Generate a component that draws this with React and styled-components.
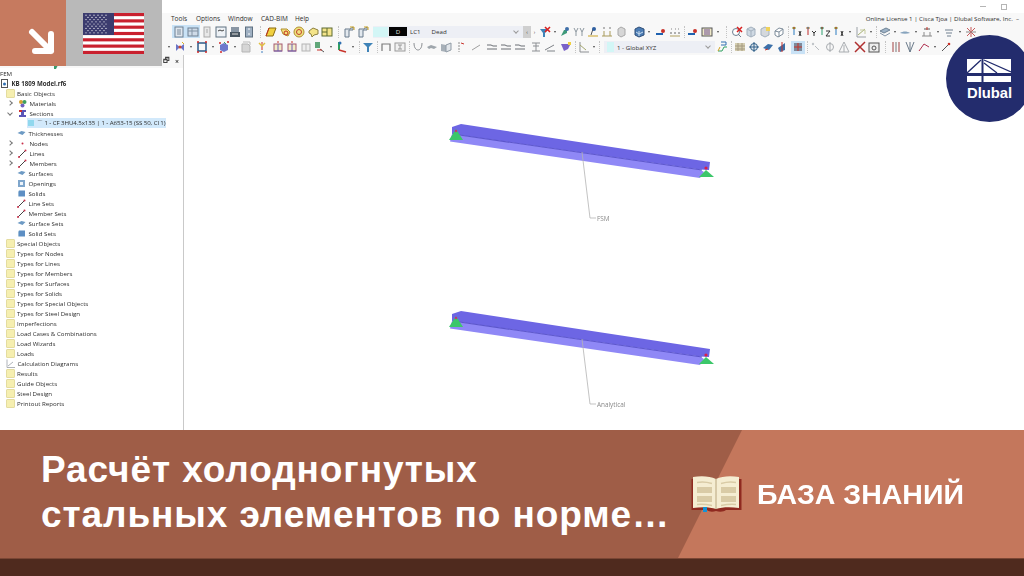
import React from 'react';
import styled, { createGlobalStyle } from 'styled-components';

const GlobalStyle = createGlobalStyle`
  html, body {
    margin: 0;
    padding: 0;
    background: #fff;
  }
`;

const Page = styled.div`
  position: relative;
  width: 1024px;
  height: 576px;
  overflow: hidden;
  display: flex;
  flex-direction: column;
  font-family: "Open Sans", "Liberation Sans", sans-serif;
`;

const Screen = styled.div`
  height: 430px;
  display: flex;
  flex-direction: column;
  filter: blur(0.45px);
  color: #2e2e2e;
  font-size: 6.15px;
`;

const TitleBar = styled.div`
  height: 13px;
  display: flex;
  justify-content: flex-end;
  align-items: center;
  gap: 15px;
  padding-right: 17px;
  box-sizing: border-box;
`;

const WinDash = styled.div`
  width: 6px;
  height: 1px;
  background: #b5b5b5;
`;

const WinRestore = styled.div`
  width: 4px;
  height: 4px;
  border: 1px solid #b5b5b5;
`;

const MenuBar = styled.div`
  height: 11px;
  display: flex;
  align-items: center;
  padding-left: 171px;
  background: #f8f8f8;
  font-size: 6.5px;
`;

const MenuItem = styled.span`
  width: ${(p) => p.$w}px;
  font-weight: 500;
`;

const License = styled.span`
  margin-left: auto;
  padding-right: 5px;
  white-space: nowrap;
  font-size: 6.15px;
`;

const ToolRow = styled.div`
  height: ${(p) => p.$h}px;
  display: flex;
  align-items: center;
  padding-left: ${(p) => p.$left}px;
  background: #f8f8f8;
  white-space: nowrap;
`;

const Slot = styled.div`
  flex: none;
  width: 14px;
  height: 13px;
  display: flex;
  align-items: center;
  justify-content: center;
  background: ${(p) => (p.$on ? '#c9e2f6' : 'transparent')};
`;

const Caret = styled.div`
  flex: none;
  width: ${(p) => p.$w || 8}px;
  display: flex;
  justify-content: center;
  &::after {
    content: '';
    border-left: 1.5px solid transparent;
    border-right: 1.5px solid transparent;
    border-top: 2px solid #444;
  }
`;

const Sep = styled.div`
  flex: none;
  width: ${(p) => p.$w}px;
  height: 12px;
  display: flex;
  justify-content: center;
  &::after {
    content: '';
    border-left: 1px dotted #c4c4c4;
  }
`;

const Gap = styled.div`
  flex: none;
  width: 2px;
`;

const LoadCombo = styled.div`
  flex: none;
  width: 150px;
  height: 12px;
  margin-left: 3px;
  display: flex;
  align-items: center;
  background: #edeff5;
`;

const Swatch = styled.div`
  flex: none;
  width: ${(p) => p.$w}px;
  height: 10px;
  margin-left: ${(p) => p.$m || 0}px;
  background: #d3f6f6;
`;

const DeadBadge = styled.div`
  flex: none;
  width: 18px;
  height: 9px;
  margin-left: 1px;
  background: #050505;
  color: #ddd;
  line-height: 9px;
  text-align: center;
`;

const ComboText = styled.span`
  margin-left: ${(p) => p.$m}px;
`;

const Chevron = styled.span`
  margin-left: auto;
  margin-right: 5px;
  width: 3px;
  height: 3px;
  margin-top: -2px;
  border-right: 1px solid #9a9a9a;
  border-bottom: 1px solid #9a9a9a;
  transform: rotate(45deg);
`;

const NavStep = styled.div`
  flex: none;
  width: ${(p) => p.$w}px;
  height: 12px;
  background: ${(p) => (p.$gray ? '#cfcfcf' : 'transparent')};
  color: #333;
  font-size: 5px;
  line-height: 12px;
  text-align: center;
`;

const CoordCombo = styled(LoadCombo)`
  width: 111px;
  margin-left: 1px;
`;

const Workspace = styled.div`
  flex: 1;
  min-height: 0;
  display: flex;
`;

const Sidebar = styled.aside`
  flex: none;
  width: 184px;
  box-sizing: border-box;
  border-right: 1px solid #c9c9c9;
  display: flex;
  flex-direction: column;
`;

const PanelHead = styled.div`
  height: 13px;
  flex: none;
  display: flex;
  align-items: center;
  justify-content: flex-end;
  gap: 5px;
  padding-right: 4px;
  background: #f8f8f8;
  color: #444;
  font-size: 7px;
  font-weight: 700;
`;

const GreenBit = styled.svg`
  margin: 8px auto 0 51px;
  width: 8px;
  height: 7px;
`;

const Row = styled.div`
  height: 10px;
  display: flex;
  align-items: center;
  white-space: nowrap;
  font-weight: ${(p) => (p.$bold ? 700 : 400)};
  padding-left: ${(p) => p.$pad}px;
`;

const Twist = styled.span`
  flex: none;
  width: 3px;
  height: 3px;
  margin: 0 ${(p) => p.$right}px 0 0;
  border-right: 1px solid #777;
  border-bottom: 1px solid #777;
  transform: rotate(${(p) => (p.$open ? '45deg' : '-45deg')});
`;

const Folder = styled.span`
  flex: none;
  width: 7px;
  height: 7px;
  margin-right: 2px;
  background: #f6efb0;
  border: 1px solid #e4dc9f;
  border-radius: 1px;
`;

const TreeIcon = styled.svg`
  flex: none;
  width: 9px;
  height: 9px;
  margin-right: 2.5px;
`;

const Selected = styled.div`
  flex: none;
  width: 139px;
  height: 10px;
  display: flex;
  align-items: center;
  background: #d2e9fb;
  letter-spacing: -0.09px;
`;

const SelSwatch = styled.span`
  flex: none;
  width: 6px;
  height: 6px;
  margin: 0 3px 0 1px;
  background: #91d8ee;
`;

const Viewport = styled.main`
  flex: 1;
  min-width: 0;
  background: #fff;
`;

const ModelSvg = styled.svg`
  display: block;
  width: 100%;
  height: 100%;
`;

const Banner = styled.section`
  height: 128px;
  flex: none;
  display: flex;
  background: #9f5d47;
`;

const TitleWrap = styled.div`
  flex: none;
  width: 678px;
  box-sizing: border-box;
  padding: 17px 0 0 41px;
`;

const Title = styled.h1`
  margin: 0;
  color: #fff;
  font-family: "Liberation Sans", Arial, sans-serif;
  font-size: 37px;
  font-weight: 700;
  line-height: 45px;
  letter-spacing: 0.9px;
  white-space: nowrap;
`;

const Category = styled.div`
  position: relative;
  flex: 1;
  display: flex;
  align-items: center;
  padding-left: 13px;
  &::before {
    content: '';
    position: absolute;
    inset: 0;
    background: #c4775c;
    clip-path: polygon(64px 0, 100% 0, 100% 100%, 0 100%);
  }
`;

const CategoryLabel = styled.span`
  position: relative;
  margin-left: 15px;
  color: #fff;
  font-family: "Liberation Sans", Arial, sans-serif;
  font-size: 28.5px;
  font-weight: 700;
  white-space: nowrap;
`;

const BookSvg = styled.svg`
  position: relative;
  flex: none;
  width: 51px;
  height: 36px;
`;

const Footer = styled.div`
  flex: 1;
  background: #4f2a1e;
  border-top: 1px solid #7a4634;
`;

const Corner = styled.div`
  position: absolute;
  left: 0;
  top: 0;
  display: flex;
  height: 66px;
`;

const ArrowBox = styled.div`
  width: 66px;
  background: #c67a5f;
`;

const FlagBox = styled.div`
  width: 96px;
  background: #b9b9b9;
  display: flex;
  align-items: center;
  padding-left: 17px;
  box-sizing: border-box;
`;

const Logo = styled.div`
  position: absolute;
  left: 946px;
  top: 35px;
  width: 87px;
  height: 87px;
  border-radius: 50%;
  background: #232c6d;
  box-sizing: border-box;
  padding: 24px 0 0 21px;
  color: #fff;
  font-family: "Liberation Sans", Arial, sans-serif;
  font-size: 14.8px;
  font-weight: 700;
  line-height: 16px;
`;

const LogoMark = styled.svg`
  display: block;
  width: 44px;
  height: 23px;
  margin-bottom: 3px;
`;

// toolbar pictures, 12x12
const glyphs = {
  win: <><rect x="2" y="1" width="8" height="10" fill="#dfe6ee" stroke="#6d7f91" /><path d="M4 4h4M4 6h4M4 8h4" stroke="#7b8a99" /></>,
  wide: <><rect x="1" y="2" width="10" height="8" fill="#cfdbe8" stroke="#6d7f91" /><path d="M1 5h10M5 2v8" stroke="#8394a5" /></>,
  page: <><rect x="3" y="1" width="6" height="10" fill="#e8e8e8" stroke="#a9a9a9" /><path d="M5 4h2M5 6h2" stroke="#aaa" /></>,
  shot: <><rect x="1" y="1" width="10" height="10" fill="#eef2f6" stroke="#5f7080" /><path d="M3 5l2-1 2 1 2-1" stroke="#444" fill="none" /></>,
  disk: <><rect x="2" y="1" width="8" height="5" fill="#8a97a5" /><rect x="1" y="6" width="10" height="5" fill="#4a5661" /><path d="M3 8h6" stroke="#ddd" /></>,
  tall: <><rect x="2.5" y="1" width="7" height="10" fill="#9fb0c2" stroke="#5f7080" /><path d="M5 3h2M5 8h2" stroke="#fff" /></>,
  para: <><path d="M4 2h7l-3 8H1z" fill="#f0d040" stroke="#8a6a10" /><path d="M4 2L1 10" stroke="#c03020" /></>,
  tag: <><path d="M2 3h6l3 3-2 4-5-2z" fill="#f4e07a" stroke="#b09030" /><circle cx="7" cy="7" r="2" fill="none" stroke="#c03020" /></>,
  target: <><circle cx="6" cy="6" r="5" fill="#efe27e" stroke="#b09030" /><circle cx="6" cy="6" r="2.5" fill="none" stroke="#c04030" /></>,
  cloud: <><path d="M2 5l4-3 5 2v4l-4 1-2 2-1-3-2-1z" fill="#f4e48a" stroke="#8c8040" /></>,
  note: <><rect x="1" y="2" width="10" height="8" fill="#f4e48a" stroke="#5c6a30" /><path d="M6 2v8M1 6h5" stroke="#5c6a30" /></>,
  ell: <><path d="M2 11V3h5l3-2v3H6v7z" fill="#e2e8ee" stroke="#687a8c" /><path d="M7 1h4v3" stroke="#c9a226" fill="none" /></>,
  funnel: <><path d="M1 2h10L7 6v5H5V6z" fill="#3f83b8" /></>,
  funnelX: <><path d="M1 3h8L6 7v4H4V7z" fill="#3f83b8" /><path d="M6 1l5 5M11 1L6 6" stroke="#d82020" strokeWidth="1.6" /></>,
  plug: <><path d="M2 10l3-6h3v3z" fill="#3e9a7a" /><circle cx="8" cy="3" r="2" fill="#3f6fa8" /></>,
  forks: <><path d="M3 10V6M9 10V6M1 2l2 4 2-4M7 2l2 4 2-4" stroke="#8c979f" fill="none" /></>,
  pinBase: <><path d="M1 10h10" stroke="#c9a226" /><path d="M4 9l2-6" stroke="#555" /><circle cx="7" cy="3" r="2" fill="#2f5fa0" /></>,
  posts: <><path d="M1 10h10M3 10V5M9 10V5" stroke="#a89a5a" /><path d="M2 2h2M8 2h2" stroke="#777" /></>,
  ghost: <><path d="M3 3l3-2 4 2v6l-4 2-3-2z" fill="#d6d6d6" stroke="#a8a8a8" /></>,
  stack: <><path d="M2 3l4-2 5 2v6l-5 2-4-2z" fill="#4b7cb4" stroke="#2f4f78" /><path d="M6 5v5M3 6l3 2 4-2" stroke="#c9dcee" /></>,
  dumb: <><path d="M1 8h7" stroke="#1f62b0" strokeWidth="2" /><circle cx="8" cy="5" r="2" fill="#c8322a" /></>,
  dashes: <><path d="M1 7h2M5 7h2M9 7h2" stroke="#666" /><path d="M2 3h1M6 3h1M9 3h1" stroke="#888" /><path d="M1 10h10" stroke="#b0a060" /></>,
  ruler: <><rect x="1" y="2" width="10" height="8" fill="#efe9c9" stroke="#555" /><path d="M3 4h6M3 6h6M3 8h6" stroke="#6a4a90" /></>,
  magX: <><circle cx="5" cy="6" r="3.5" fill="#fff" stroke="#6d7f91" /><path d="M7 8l3 3" stroke="#6d7f91" /><path d="M6 1l5 5M11 1L6 6" stroke="#d82020" strokeWidth="1.5" /></>,
  cube: <><path d="M2 3l4-2 4 2v6l-4 2-4-2z" fill="#cfd9e3" stroke="#a3b0bd" /><path d="M6 5v6M2 3l4 2 4-2" stroke="#a3b0bd" fill="none" /></>,
  cubeY: <><path d="M2 3l4-2 4 2v6l-4 2-4-2z" fill="#d4d8dc" stroke="#a3b0bd" /><path d="M7 1h4v4H7z" fill="#efd25a" /></>,
  cubeLine: <><path d="M2 5l4-3 4 1v5l-5 3-3-2z" fill="#fff" stroke="#7e8d9b" /><path d="M6 6v5M2 5l4 1 4-3" stroke="#7e8d9b" fill="none" /></>,
  axisX: <><path d="M3 3v6" stroke="#2d7dc0" /><circle cx="3" cy="2" r="1.2" fill="#d02a2a" /><path d="M1 2h4" stroke="#7ab040" /><path d="M8 5l2 5M10 5l-2 5" stroke="#333" /></>,
  axisY: <><path d="M3 3v6" stroke="#c02a2a" /><circle cx="3" cy="2" r="1.2" fill="#2f7fc0" /><path d="M1 2h4" stroke="#d07a30" /><path d="M7 5l2 2 2-2M9 7v3" stroke="#333" fill="none" /></>,
  axisZ: <><path d="M3 3v6" stroke="#2fa070" /><circle cx="3" cy="2" r="1.2" fill="#d02a2a" /><path d="M1 2h4" stroke="#2fa070" /><path d="M7 5h4l-4 5h4" stroke="#333" fill="none" /></>,
  chart: <><path d="M2 1v10h9" stroke="#9aa0a6" fill="none" /><path d="M3 9l7-6" stroke="#a5b070" /><path d="M5 4h5v4" stroke="#c4c9a0" fill="none" /></>,
  plate: <><path d="M1 5l6-3 4 2-6 3z" fill="#9fb4c8" stroke="#6f8396" /><path d="M1 7l5 3 5-3" stroke="#8294a6" fill="none" /></>,
  fin: <><path d="M1 7c3-2 7-2 10 0-3 1-7 1-10 0z" fill="#86a3bd" /></>,
  pier: <><path d="M1 10h10M3 10V6M9 10V6" stroke="#8a8a8a" /><path d="M3 3h6" stroke="#555" /><path d="M6 1v3" stroke="#c8322a" /></>,
  shelf: <><path d="M2 3h8v2H2zM3 6h6v2H3zM4 9h4v2H4z" fill="#b4bcc4" /></>,
  spark: <><path d="M2 2l8 8M2 10l8-8M6 1v10" stroke="#c85a5a" /><path d="M1 6h10" stroke="#8a8a8a" /></>,
  block: <><rect x="1" y="3" width="9" height="7" fill="#5c8bb8" /><path d="M3 1l3 3" stroke="#c8322a" /></>,
  fan: <><path d="M2 3l4 3-4 4zM10 3L6 6l4 4z" fill="#6a74c8" /><circle cx="6" cy="6" r="1.5" fill="#d04a2a" /><path d="M8 1l2 2" stroke="#e0b020" /></>,
  frame: <><rect x="2" y="2" width="8" height="8" fill="none" stroke="#2d5a88" strokeWidth="1.5" /><path d="M1 1h2M9 11h2M1 11h2M9 1h2" stroke="#d02a2a" strokeWidth="1.5" /></>,
  cubes: <><path d="M2 4l4-2 4 2v5l-4 2-4-2z" fill="#6f78cc" /><path d="M1 2h2M9 1h2M2 11h2" stroke="#d02a2a" strokeWidth="1.5" /><path d="M6 1l2 2" stroke="#40a070" /></>,
  sheetG: <><path d="M2 3h6l2 2v6H2z" fill="#d6d6d6" stroke="#b5b5b5" /><path d="M3 1h7v3" stroke="#bbb" fill="none" /></>,
  bolt: <><path d="M6 1v8" stroke="#c8322a" /><path d="M3 2l3 3 3-3" stroke="#e0c040" fill="none" strokeWidth="1.5" /><path d="M5 11h2" stroke="#3f7fc0" /></>,
  gate: <><rect x="2" y="3" width="8" height="7" fill="#f1ecc8" stroke="#a45a70" /><path d="M2 10h8M6 3v7" stroke="#6f5fb0" /><path d="M5 1h2" stroke="#c8322a" /></>,
  gateG: <><rect x="2" y="3" width="8" height="7" fill="#eee" stroke="#b4b4b4" /><path d="M6 3v7" stroke="#bbb" /></>,
  axes: <><rect x="1" y="1" width="5" height="6" fill="#62a77a" /><path d="M6 8l4 3" stroke="#555" /><path d="M3 9h5" stroke="#c8322a" /></>,
  axes2: <><path d="M3 1v8" stroke="#2fa060" strokeWidth="2" /><path d="M3 9l7 2" stroke="#c8322a" strokeWidth="1.5" /><circle cx="4" cy="2" r="1.5" fill="#2f6fb0" /></>,
  arch: <><path d="M2 10V3h8v7" fill="none" stroke="#7a7a7a" strokeWidth="1.2" /></>,
  boxI: <><rect x="1" y="2" width="10" height="8" fill="#f1f1f1" stroke="#9a9a9a" /><path d="M4 4h4M4 8h4M6 4v4" stroke="#9a9a9a" /></>,
  vee: <><path d="M2 2c0 6 3 7 4 7s4-1 4-7" fill="none" stroke="#8c8f93" /></>,
  shoe: <><path d="M1 6l4-2 6 2-3 2-3-1-2 1z" fill="#9fa6ac" /></>,
  fold: <><path d="M1 3l5 1v7l-5-1z" fill="#a7b0b8" /><path d="M6 4l5-2v7l-5 2z" fill="#e2e6ea" stroke="#8f9aa5" /></>,
  tick: <><path d="M5 1v10" stroke="#909090" strokeDasharray="2 1" /><path d="M7 2l3 1" stroke="#c8322a" /></>,
  slash: <><path d="M2 9l8-5" stroke="#a0a0a0" /></>,
  eq: <><path d="M1 4h4c1 0 1 1 2 1h4M1 8h10" stroke="#6a6f75" fill="none" /></>,
  hbox: <><path d="M2 2h8M2 10h8M6 2v8M3 5h6" stroke="#8c8f93" fill="none" /></>,
  wedge: <><path d="M1 9l9-5M3 10h8" stroke="#7f8388" /></>,
  star: <><path d="M1 3h7l3-1-3 6-4 2z" fill="#7a62c8" /><path d="M8 1h3v3H8z" fill="#f0d040" /></>,
  graph: <><path d="M2 1v10h9" stroke="#8c8f93" fill="none" /><path d="M2 4l6 5" stroke="#a5a870" /></>,
  tree: <><path d="M2 10h4l2-4h3" stroke="#2fa060" fill="none" /><path d="M5 1h5v3H5" stroke="#2f6fb0" fill="none" /><path d="M2 10l2-4" stroke="#d0a020" /></>,
  mesh: <><rect x="1" y="2" width="10" height="8" fill="#d4cdb0" /><path d="M1 5h10M1 8h10M4 2v8M8 2v8" stroke="#a59a80" /></>,
  hit: <><circle cx="6" cy="6" r="3.5" fill="#e4e9ee" stroke="#2f5f88" /><path d="M6 1v10M1 6h10" stroke="#2f5f88" /></>,
  wing: <><path d="M1 7l5-4 5 1-4 5z" fill="#3b6fa8" /><path d="M3 9l3-1" stroke="#c8322a" /></>,
  wing2: <><path d="M2 7l7-5v7l-5 2z" fill="#3b6fa8" /><path d="M6 1v10" stroke="#c8322a" /></>,
  box3: <><rect x="2" y="2" width="8" height="8" fill="#7d8a9a" /><path d="M2 6h8M6 2v8" stroke="#c8322a" /></>,
  dots: <><circle cx="3" cy="3" r="1.2" fill="#c0c4c8" /><path d="M5 5l4 4" stroke="#b8bcc0" /></>,
  phi: <><circle cx="6" cy="6" r="3.5" fill="none" stroke="#a8acb0" /><path d="M6 1v10" stroke="#a8acb0" /></>,
  tri: <><path d="M6 1l5 10H1z" fill="none" stroke="#a8acb0" /><path d="M6 4v7" stroke="#a8acb0" /></>,
  xRed: <><path d="M1 1l10 10M11 1L1 11" stroke="#b03030" strokeWidth="1.5" /></>,
  cam: <><rect x="1" y="2" width="10" height="9" fill="#eee" stroke="#555" /><circle cx="6" cy="7" r="2" fill="none" stroke="#555" /></>,
  bars: <><path d="M3 1v10M9 1v10" stroke="#a04040" /><path d="M6 1v10" stroke="#777" /></>,
  tines: <><path d="M2 1l4 10 4-10M6 1v10" stroke="#6a7a8a" fill="none" /></>,
  kink: <><path d="M1 10l5-7 5 3" stroke="#b03050" fill="none" /></>,
  rod: <><path d="M2 10l8-8" stroke="#555" /><circle cx="9" cy="3" r="1.3" fill="#c8322a" /></>,
};

const Tool = ({ name }) => {
  const on = name.endsWith('*');
  const key = on ? name.slice(0, -1) : name;
  return (
    <Slot $on={on}>
      <svg width="12" height="12" viewBox="0 0 12 12">
        <g fill="none" strokeWidth="1">{glyphs[key]}</g>
      </svg>
    </Slot>
  );
};

const Tools = ({ list }) =>
  list.split(' ').map((t, i) => {
    if (t === 'v') return <Caret key={i} />;
    if (t === 'u') return <Caret key={i} $w={6} />;
    if (t === '|') return <Sep key={i} $w={8} />;
    if (t === ':') return <Sep key={i} $w={4} />;
    if (t === '+') return <Gap key={i} />;
    return <Tool key={i} name={t} />;
  });

const menu = [
  ['Tools', 25],
  ['Options', 32],
  ['Window', 33],
  ['CAD-BIM', 34],
  ['Help', 30],
];

const tree = [
  { t: 'FEM', pad: 0, plain: true },
  { t: 'KB 1809 Model.rf6', pad: -5, bold: true, icon: 'file' },
  { t: 'Basic Objects', pad: 6, folder: true },
  { t: 'Materials', pad: 8, tw: 'closed', icon: 'mat' },
  { t: 'Sections', pad: 8, tw: 'open', icon: 'sec' },
  { t: '1 - CF 3HU4.5x135 | 1 - A653-15 (SS 50, Cl 1)', selected: true, pad: 27 },
  { t: 'Thicknesses', pad: 17, icon: 'plate' },
  { t: 'Nodes', pad: 8, tw: 'closed', icon: 'dot' },
  { t: 'Lines', pad: 8, tw: 'closed', icon: 'line' },
  { t: 'Members', pad: 8, tw: 'closed', icon: 'line' },
  { t: 'Surfaces', pad: 17, icon: 'plate' },
  { t: 'Openings', pad: 17, icon: 'open' },
  { t: 'Solids', pad: 17, icon: 'solid' },
  { t: 'Line Sets', pad: 17, icon: 'line' },
  { t: 'Member Sets', pad: 17, icon: 'line' },
  { t: 'Surface Sets', pad: 17, icon: 'plate' },
  { t: 'Solid Sets', pad: 17, icon: 'solid' },
  ...[
    'Special Objects',
    'Types for Nodes',
    'Types for Lines',
    'Types for Members',
    'Types for Surfaces',
    'Types for Solids',
    'Types for Special Objects',
    'Types for Steel Design',
    'Imperfections',
    'Load Cases & Combinations',
    'Load Wizards',
    'Loads',
  ].map((t) => ({ t, pad: 6, folder: true })),
  { t: 'Calculation Diagrams', pad: 6, icon: 'diagram' },
  ...['Results', 'Guide Objects', 'Steel Design', 'Printout Reports'].map((t) => ({ t, pad: 6, folder: true })),
];

const treeGlyphs = {
  file: <><rect x="1.5" y="0.5" width="6" height="8" fill="#fff" stroke="#555" /><circle cx="4.5" cy="5" r="1.5" fill="#2f6fb0" /></>,
  mat: <><circle cx="3" cy="3" r="2" fill="#d8a030" /><circle cx="6.5" cy="3" r="2" fill="#3f9f60" /><circle cx="4.5" cy="6.5" r="2" fill="#7060c0" /></>,
  sec: <><path d="M1 1h7v2H6v3h2v2H1V6h2V3H1z" fill="#5a55b8" /><path d="M1 1h3v2H1z" fill="#d03030" /></>,
  plate: <path d="M0.5 4l4-2 4 1-3 3z" fill="#6d9ac4" />,
  dot: <circle cx="4.5" cy="4.5" r="1" fill="#c8304a" />,
  line: <><path d="M1 8l6-6" stroke="#444" /><circle cx="7.5" cy="1.5" r="1" fill="#c8304a" /><circle cx="1" cy="8" r="1" fill="#c8304a" /></>,
  open: <><rect x="1" y="1" width="7" height="7" fill="#7fa6cc" /><rect x="3" y="3" width="3" height="3" fill="#eef4fa" /></>,
  solid: <><rect x="2" y="1.5" width="6" height="6" fill="#5d8fc4" /><path d="M2 1.500l-1 1v5l1 0z" fill="#9abbd8" /></>,
  diagram: <path d="M1 0.5v8h8M2 7l5-4" fill="none" stroke="#9aa0a6" strokeWidth="0.8" />,
};

const Beam = ({ dy, label, endX, endY }) => (
  <g transform={`translate(0 ${dy})`}>
    <polygon points="452,127 461,124 710,162 709,170 700,169.500 452,134" fill="#6d66e4" />
    <polygon points="452,134 700,169.500 704,172 700,178 450,141.500" fill="#8f88f6" />
    <path d="M456,134.500 L702,170" stroke="#5c56cc" strokeWidth="1.2" />
    <polygon points="456,129 463,140 449,140" fill="#3cc76a" />
    <polygon points="706,170 714,177 699,177" fill="#3cc76a" />
    <circle cx="456" cy="131" r="1.2" fill="#c43a6a" />
    <circle cx="706" cy="168" r="1.600" fill="#d8204a" />
    <path d={`M582,152 L${endX},${endY - dy} L596,${endY - dy}`} fill="none" stroke="#b4b4b4" strokeWidth="0.8" />
    <text x="597" y={endY - dy + 2.5} fontSize="6.4" fill="#888" fontFamily='"Open Sans", sans-serif'>{label}</text>
  </g>
);

const stars = [];
for (let r = 0; r < 9; r++) {
  const n = r % 2 === 0 ? 6 : 5;
  for (let c = 0; c < n; c++) {
    stars.push([(r % 2 === 0 ? 2 : 4) + c * 4, 2.2 + r * 2.2]);
  }
}

const Flag = () => (
  <svg width="61" height="41" viewBox="0 0 61 41">
    <rect width="61" height="41" fill="#fff" />
    {[0, 2, 4, 6, 8, 10, 12].map((i) => (
      <rect key={i} y={(i * 41) / 13} width="61" height={41 / 13} fill="#c9202e" />
    ))}
    <rect width="31" height="22" fill="#3b3b6e" />
    {stars.map(([x, y], i) => (
      <circle key={i} cx={x + 1} cy={y} r="0.6" fill="#fff" />
    ))}
  </svg>
);

const Book = () => (
  <BookSvg viewBox="0 0 51 36">
    <rect x="0.5" y="3" width="50" height="31" fill="#8f2a20" />
    <path d="M25 35c3 1 8 1 10-1H16c2 2 6 2 9 1z" fill="#8f2a20" />
    <path d="M2 1c8-1.500 17-1 23 2 6-3 15-3.500 23-2v31c-8-1-17-1-23 1-6-2-15-2-23-1z" fill="#f5edd2" />
    <path d="M25 3v30" stroke="#b9a67f" strokeWidth="1" />
    <rect x="6" y="11" width="15" height="6" fill="#d9cba6" />
    <rect x="6" y="20" width="15" height="6" fill="#d9cba6" />
    <rect x="30" y="11" width="15" height="6" fill="#d9cba6" />
    <rect x="30" y="20" width="15" height="6" fill="#d9cba6" />
    <path d="M6 6.500c5-1 10-.5 15 1M30 7.500c5-1.500 10-2 15-1M6 28.500c5-.5 10 0 15 1M30 29.500c5-1 10-1.500 15-1" stroke="#d9cba6" strokeWidth="1.4" fill="none" />
    <rect x="12" y="31" width="4" height="5" fill="#1593d6" />
  </BookSvg>
);

export default function App() {
  return (
    <>
      <GlobalStyle />
      <Page>
        <Screen>
          <TitleBar>
            <WinDash />
            <WinRestore />
          </TitleBar>
          <MenuBar>
            {menu.map(([t, w]) => (
              <MenuItem key={t} $w={w}>{t}</MenuItem>
            ))}
            <License>Online License 1 | Cisca Tjoa | Dlubal Software, Inc.&nbsp;&nbsp;–</License>
          </MenuBar>
          <ToolRow $h={15} $left={172}>
            <Tools list="win* wide* page shot disk tall | para tag target cloud note | ell ell" />
            <LoadCombo>
              <Swatch $w={15} />
              <DeadBadge>D</DeadBadge>
              <ComboText $m={3}>LC1</ComboText>
              <ComboText $m={11}>Dead</ComboText>
              <Chevron />
            </LoadCombo>
            <NavStep $w={8} $gray>‹</NavStep>
            <NavStep $w={7}>›</NavStep>
            <Tools list="funnelX u plug forks pinBase posts ghost + + stack u + dumb dashes : dumb ruler v | magX cube cubeY cubeLine : axisX axisY axisZ axisX v chart u : plate u fin v pier v shelf v spark" />
          </ToolRow>
          <ToolRow $h={16} $left={151}>
            <Tools list="block v fan v frame v cubes v sheetG + bolt + gate gate gateG axes v axes2 v : funnel : arch boxI : vee shoe fold tick + slash + eq eq eq + hbox wedge + star : graph u : +" />
            <CoordCombo>
              <Swatch $w={7} $m={3} />
              <ComboText $m={3}>1 - Global XYZ</ComboText>
              <Chevron />
            </CoordCombo>
            <Tools list="tree : mesh hit wing wing2 + box3* : dots phi tri + xRed cam | bars tines kink v rod" />
          </ToolRow>
          <Workspace>
            <Sidebar>
              <PanelHead>
                <GreenBit viewBox="0 0 8 7">
                  <path d="M1 0h6v3L5 7H3V4H1z" fill="#3a9a6a" />
                </GreenBit>
                <span>🗗</span>
                <span>×</span>
              </PanelHead>
              <div>
                {tree.map((r) => (
                  <Row key={r.t} $pad={r.pad} $bold={r.bold}>
                    {r.tw && <Twist $open={r.tw === 'open'} $right={6} />}
                    {r.folder && <Folder />}
                    {r.icon && <TreeIcon viewBox="0 0 9 9">{treeGlyphs[r.icon]}</TreeIcon>}
                    {r.selected ? (
                      <Selected>
                        <SelSwatch />
                        <span>⌒ {r.t}</span>
                      </Selected>
                    ) : (
                      r.t
                    )}
                  </Row>
                ))}
              </div>
            </Sidebar>
            <Viewport>
              <ModelSvg viewBox="184 55 840 375">
                <Beam dy={0} label="FSM" endX={590} endY={218} />
                <Beam dy={187} label="Analytical" endX={590} endY={404} />
              </ModelSvg>
            </Viewport>
          </Workspace>
        </Screen>
        <Banner>
          <TitleWrap>
            <Title>
              Расчёт холодногнутых
              <br />
              стальных элементов по норме…
            </Title>
          </TitleWrap>
          <Category>
            <Book />
            <CategoryLabel>БАЗА ЗНАНИЙ</CategoryLabel>
          </Category>
        </Banner>
        <Footer />
        <Corner>
          <ArrowBox>
            <svg width="66" height="66" viewBox="0 0 66 66">
              <path d="M32 32L51 51M35 51H51V34" fill="none" stroke="#fff" strokeWidth="6" strokeLinecap="round" strokeLinejoin="round" />
            </svg>
          </ArrowBox>
          <FlagBox>
            <Flag />
          </FlagBox>
        </Corner>
        <Logo>
          <LogoMark viewBox="0 0 44 23">
            <rect width="44" height="23" fill="#fff" />
            <rect y="14" width="44" height="3" fill="#232c6d" />
            <rect x="14.500" width="2" height="23" fill="#232c6d" />
            <path d="M0 14L14 1M17 1L44 13M17 4L30 14" stroke="#232c6d" strokeWidth="1.3" fill="none" />
          </LogoMark>
          Dlubal
        </Logo>
      </Page>
    </>
  );
}
